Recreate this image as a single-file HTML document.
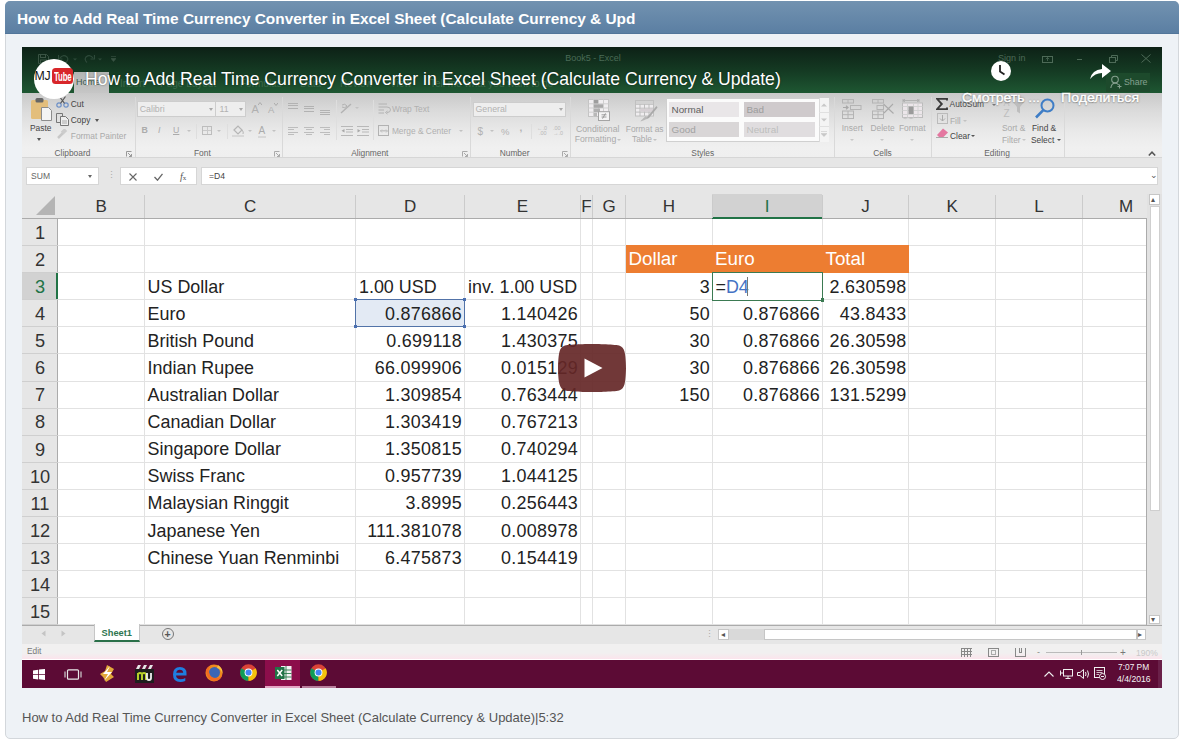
<!DOCTYPE html><html><head><meta charset="utf-8"><style>
*{margin:0;padding:0;box-sizing:border-box}
html,body{width:1180px;height:739px;overflow:hidden;background:#fff;font-family:"Liberation Sans",sans-serif}
.a{position:absolute}
.t{white-space:nowrap}
.box{left:5px;top:1px;width:1174px;height:738px;border:1px solid #d3d7db;border-radius:5px;background:#eef2f6}
.hdr{left:-1px;top:-1px;width:1174px;height:32.5px;background:linear-gradient(#7292b0,#5b7fa3);border-bottom:1px solid #52769a;border-radius:5px 5px 0 0}
.hdrt{left:12px;top:9.3px;font-size:15.4px;font-weight:bold;color:#fff;white-space:nowrap}
.vid{left:22px;top:47px;width:1140px;height:641px;background:#fff;overflow:hidden}
.cap{left:22px;top:710px;font-size:13px;color:#555;white-space:nowrap}
.rl{color:#666}
.rd{color:#444}
.rf{color:#a8a8a8}
.cell{color:#222}
</style></head><body>
<div class="a box">
<div class="a hdr"><div class="a hdrt">How to Add Real Time Currency Converter in Excel Sheet (Calculate Currency &amp; Upd</div></div>
</div>
<div class="a vid">
<div class="a " style="left:0.0px;top:0.0px;width:1140.0px;height:46.0px;background:linear-gradient(#0d2116,#153c24 55%,#1e5732)"></div>
<div class="a " style="left:51.8px;top:25.1px;width:35.1px;height:20.9px;background:linear-gradient(#b3b5b3,#c6c6c6)"></div>
<div class="a t " style="left:54.0px;top:30.9px;font-size:9px;line-height:9px;color:#3c5a48">Home</div>
<div class="a t " style="left:98.0px;top:31.5px;font-size:10px;line-height:10px;color:#3d6a4b">Insert</div>
<div class="a t " style="left:138.0px;top:31.5px;font-size:10px;line-height:10px;color:#3d6a4b">Page Layout</div>
<div class="a t " style="left:218.0px;top:31.5px;font-size:10px;line-height:10px;color:#3d6a4b">Formulas</div>
<div class="a t " style="left:278.0px;top:31.5px;font-size:10px;line-height:10px;color:#3d6a4b">Data</div>
<div class="a t " style="left:318.0px;top:31.5px;font-size:10px;line-height:10px;color:#3d6a4b">Review</div>
<div class="a t " style="left:368.0px;top:31.5px;font-size:10px;line-height:10px;color:#3d6a4b">View</div>
<div class="a t " style="left:408.0px;top:31.5px;font-size:10px;line-height:10px;color:#3d6a4b">Tell me what you want to do</div>
<div class="a t " style="left:271.0px;width:600px;text-align:center;top:7.4px;font-size:9px;line-height:9px;color:#4a6b56">Book5 - Excel</div>
<div class="a t " style="left:976.0px;top:7.4px;font-size:9px;line-height:9px;color:#4d6a57">Sign in</div>
<svg class="a" style="left:1020.0px;top:8.5px" width="11" height="7" viewBox="0 0 11 7"><rect x="0.5" y="0.5" width="10" height="6" fill="none" stroke="#4d6a57"/><path d="M5.5 1.5V5M3.8 3.2L5.5 1.5L7.2 3.2" fill="none" stroke="#4d6a57" stroke-width="0.8"/></svg>
<div class="a " style="left:1055.0px;top:11.5px;width:5.0px;height:1.0px;background:#4d6a57"></div>
<svg class="a" style="left:1087.0px;top:7.5px" width="9" height="8" viewBox="0 0 9 8"><rect x="0.5" y="2.5" width="6" height="5" fill="none" stroke="#4d6a57"/><path d="M2.5 2.5V0.5H8.5V5.5H6.5" fill="none" stroke="#4d6a57"/></svg>
<svg class="a" style="left:1118.5px;top:7.0px" width="10" height="9" viewBox="0 0 10 9"><path d="M0.5 0.5L9.5 8.5M9.5 0.5L0.5 8.5" stroke="#4d6a57" stroke-width="1"/></svg>
<svg class="a" style="left:15.5px;top:7.0px" width="11" height="10" viewBox="0 0 11 10"><path d="M0.5 0.5H8.5L10.5 2.5V9.5H0.5Z" fill="none" stroke="#3a5444" stroke-width="1"/><rect x="2.5" y="0.5" width="5" height="3" fill="none" stroke="#3a5444"/><rect x="2.5" y="6" width="6" height="3.5" fill="none" stroke="#3a5444"/></svg>
<svg class="a" style="left:36.0px;top:7.0px" width="11" height="9" viewBox="0 0 11 9"><path d="M2 4Q5 0 9 3Q11 6 8 8.5" fill="none" stroke="#2e4a3a" stroke-width="1.2"/><path d="M0.5 1V5H4.5" fill="none" stroke="#2e4a3a" stroke-width="1.2"/></svg>
<svg class="a" style="left:50.5px;top:10.5px" width="4" height="3" viewBox="0 0 4 3"><path d="M0 0.5L2 2.5L4 0.5Z" fill="#2e4a3a"/></svg>
<svg class="a" style="left:61.5px;top:7.0px" width="11" height="9" viewBox="0 0 11 9"><path d="M9 4Q6 0 2 3Q0 6 3 8.5" fill="none" stroke="#2e4a3a" stroke-width="1.2"/><path d="M10.5 1V5H6.5" fill="none" stroke="#2e4a3a" stroke-width="1.2"/></svg>
<svg class="a" style="left:75.5px;top:10.5px" width="4" height="3" viewBox="0 0 4 3"><path d="M0 0.5L2 2.5L4 0.5Z" fill="#2e4a3a"/></svg>
<svg class="a" style="left:88.5px;top:9.0px" width="5" height="6" viewBox="0 0 5 6"><path d="M0 0.5H5M0 2.5L2.5 5.5L5 2.5Z" fill="#3a5444" stroke="#3a5444" stroke-width="0.6"/></svg>
<div class="a " style="left:1084.0px;top:25.7px;width:43.8px;height:19.1px;background:#1d4a2c"></div>
<div class="a t " style="left:1102.0px;top:31.1px;font-size:8.8px;line-height:8.8px;color:#86a08f">Share</div>
<svg class="a" style="left:1088.0px;top:28.0px" width="12" height="14" viewBox="0 0 12 14"><circle cx="5" cy="4.5" r="3.3" fill="none" stroke="#86a08f" stroke-width="1.1"/><path d="M0.8 13Q1.5 8.3 5 8.3Q7.5 8.3 8.7 10M9.5 9.5v4M7.5 11.5h4" fill="none" stroke="#86a08f" stroke-width="1.1"/></svg>
<div class="a " style="left:0.0px;top:46.0px;width:1140.0px;height:65.0px;background:linear-gradient(#c9c9c9,#dcdcdc 30%,#eaeaea 62%,#f0f0f0 85%,#efefef);border-bottom:1px solid #d6d6d6"></div>
<div class="a " style="left:112.5px;top:50.0px;width:1.0px;height:60.0px;background:#d9d9d9"></div>
<div class="a " style="left:259.5px;top:50.0px;width:1.0px;height:60.0px;background:#d9d9d9"></div>
<div class="a " style="left:447.5px;top:50.0px;width:1.0px;height:60.0px;background:#d9d9d9"></div>
<div class="a " style="left:547.5px;top:50.0px;width:1.0px;height:60.0px;background:#d9d9d9"></div>
<div class="a " style="left:811.5px;top:50.0px;width:1.0px;height:60.0px;background:#d9d9d9"></div>
<div class="a " style="left:909.0px;top:50.0px;width:1.0px;height:60.0px;background:#d9d9d9"></div>
<div class="a " style="left:1041.5px;top:50.0px;width:1.0px;height:60.0px;background:#d9d9d9"></div>
<div class="a " style="left:174.0px;top:77.0px;width:1.0px;height:15.0px;background:#dedede"></div>
<div class="a " style="left:204.5px;top:77.0px;width:1.0px;height:15.0px;background:#dedede"></div>
<div class="a " style="left:313.5px;top:53.0px;width:1.0px;height:40.0px;background:#dedede"></div>
<div class="a " style="left:350.5px;top:53.0px;width:1.0px;height:40.0px;background:#dedede"></div>
<div class="a " style="left:509.0px;top:77.0px;width:1.0px;height:15.0px;background:#dedede"></div>
<svg class="a" style="left:9.0px;top:50.0px" width="22" height="25" viewBox="0 0 22 25"><rect x="0" y="3" width="17" height="19" rx="1.5" fill="#e3be7c"/><rect x="4.5" y="1" width="8" height="4.5" rx="1.5" fill="#666"/><path d="M10.5 10.5H17.5L20.5 13.5V23.5H10.5Z" fill="#f4f4f4" stroke="#8c8c8c"/></svg>
<div class="a t " style="left:8.0px;top:76.5px;font-size:8.4px;line-height:8.4px;color:#444;">Paste</div>
<div class="a" style="left:15.0px;top:91.0px;width:0;height:0;border-left:2.5px solid transparent;border-right:2.5px solid transparent;border-top:3.0px solid #555"></div>
<svg class="a" style="left:34.0px;top:49.0px" width="13" height="12" viewBox="0 0 13 12"><circle cx="3" cy="9" r="2.2" fill="none" stroke="#6b8fc7" stroke-width="1.2"/><circle cx="10" cy="9" r="2.2" fill="none" stroke="#6b8fc7" stroke-width="1.2"/><path d="M4.5 7.3L9.5 0.5M8.5 7.3L3.5 0.5" stroke="#555" stroke-width="1.1"/></svg>
<div class="a t " style="left:48.8px;top:52.6px;font-size:8.4px;line-height:8.4px;color:#444;">Cut</div>
<svg class="a" style="left:34.0px;top:66.0px" width="13" height="13" viewBox="0 0 13 13"><path d="M0.5 0.5H6.5V9.5H0.5Z" fill="none" stroke="#777"/><path d="M4.5 3.5H9.5L12.5 6.5V12.5H4.5Z" fill="#eee" stroke="#777"/><path d="M6 8h5M6 10h5" stroke="#aaa"/></svg>
<div class="a t " style="left:48.8px;top:68.9px;font-size:8.4px;line-height:8.4px;color:#444;">Copy</div>
<div class="a" style="left:73.0px;top:72.0px;width:0;height:0;border-left:2.5px solid transparent;border-right:2.5px solid transparent;border-top:3.0px solid #555"></div>
<svg class="a" style="left:35.0px;top:82.0px" width="11" height="10" viewBox="0 0 11 10"><path d="M1 9L6 4" stroke="#c8c8c8" stroke-width="2.5"/><rect x="5" y="0.5" width="5" height="4" fill="#ccc" transform="rotate(-45 7 3)"/></svg>
<div class="a t " style="left:48.8px;top:85.2px;font-size:8.4px;line-height:8.4px;color:#aaa;">Format Painter</div>
<div class="a t " style="left:32.5px;top:101.7px;font-size:8.4px;line-height:8.4px;color:#666;">Clipboard</div>
<svg class="a" style="left:104.0px;top:104.0px" width="6" height="6" viewBox="0 0 6 6"><path d="M0.5 5.5V0.5H5.5" fill="none" stroke="#999"/><path d="M2 2L5.5 5.5M5.5 3V5.5H3" fill="none" stroke="#999"/></svg>
<div class="a " style="left:115.2px;top:54.4px;width:79.2px;height:15.5px;border:1px solid #cdcdcd;background:#eeeeee"></div>
<div class="a t " style="left:117.7px;top:57.8px;font-size:8.8px;line-height:8.8px;color:#b2b2b2;">Calibri</div>
<div class="a" style="left:186.5px;top:61.0px;width:0;height:0;border-left:2.5px solid transparent;border-right:2.5px solid transparent;border-top:3.0px solid #aaa"></div>
<div class="a " style="left:194.4px;top:54.4px;width:30.1px;height:15.5px;border:1px solid #cdcdcd;border-left:none;background:#eeeeee"></div>
<div class="a t " style="left:197.4px;top:57.8px;font-size:8.8px;line-height:8.8px;color:#b2b2b2;">11</div>
<div class="a" style="left:216.5px;top:61.0px;width:0;height:0;border-left:2.5px solid transparent;border-right:2.5px solid transparent;border-top:3.0px solid #aaa"></div>
<div class="a t " style="left:229.5px;top:56.7px;font-size:11px;line-height:11px;color:#b0b0b0;">A</div>
<svg class="a" style="left:236.0px;top:55.0px" width="4" height="4" viewBox="0 0 4 4"><path d="M0 3L2 0.5L4 3" fill="none" stroke="#aaa"/></svg>
<div class="a t " style="left:246.0px;top:58.0px;font-size:9.5px;line-height:9.5px;color:#b0b0b0;">A</div>
<svg class="a" style="left:252.0px;top:55.0px" width="4" height="4" viewBox="0 0 4 4"><path d="M0 1L2 3.5L4 1" fill="none" stroke="#aaa"/></svg>
<div class="a t " style="left:119.5px;top:79.0px;font-size:8.8px;line-height:8.8px;color:#ababab;font-weight:bold">B</div>
<div class="a t " style="left:136.0px;top:79.0px;font-size:8.8px;line-height:8.8px;color:#ababab;font-family:"Liberation Serif",serif"><i>I</i></div>
<div class="a t " style="left:151.0px;top:79.0px;font-size:8.8px;line-height:8.8px;color:#ababab;"><u>U</u></div>
<div class="a" style="left:164.5px;top:83.0px;width:0;height:0;border-left:2.0px solid transparent;border-right:2.0px solid transparent;border-top:2.5px solid #c2c2c2"></div>
<div class="a " style="left:180.0px;top:79.0px;width:10.0px;height:9.0px;border:1px solid #bdbdbd;background:linear-gradient(#c9c9c9,#c9c9c9) center/1px 100% no-repeat,linear-gradient(#c9c9c9,#c9c9c9) center/100% 1px no-repeat"></div>
<div class="a" style="left:194.6px;top:83.0px;width:0;height:0;border-left:2.0px solid transparent;border-right:2.0px solid transparent;border-top:2.5px solid #c2c2c2"></div>
<svg class="a" style="left:210.0px;top:77.0px" width="12" height="13" viewBox="0 0 12 13"><path d="M2 6L6 2L10 6L6 10Z" fill="none" stroke="#b5b5b5" stroke-width="1.2"/><path d="M10 6Q12 8 11 10" stroke="#b5b5b5" fill="none"/><rect x="0" y="11" width="12" height="2" fill="#d8d8d8"/></svg>
<div class="a" style="left:225.5px;top:83.0px;width:0;height:0;border-left:2.0px solid transparent;border-right:2.0px solid transparent;border-top:2.5px solid #c2c2c2"></div>
<div class="a t " style="left:236.5px;top:79.0px;font-size:10px;line-height:10px;color:#ababab;">A</div>
<div class="a " style="left:236.0px;top:89.0px;width:8.0px;height:2.0px;background:#d8d8d8"></div>
<div class="a" style="left:250.0px;top:83.0px;width:0;height:0;border-left:2.0px solid transparent;border-right:2.0px solid transparent;border-top:2.5px solid #c2c2c2"></div>
<div class="a t " style="left:172.0px;top:101.7px;font-size:8.4px;line-height:8.4px;color:#666;">Font</div>
<svg class="a" style="left:251.5px;top:104.0px" width="6" height="6" viewBox="0 0 6 6"><path d="M0.5 5.5V0.5H5.5" fill="none" stroke="#aaa"/><path d="M2 2L5.5 5.5M5.5 3V5.5H3" fill="none" stroke="#aaa"/></svg>
<div class="a " style="left:265.5px;top:56.0px;width:10.0px;height:1.0px;background:#b2b2b2"></div>
<div class="a " style="left:265.5px;top:58.4px;width:10.0px;height:1.0px;background:#b2b2b2"></div>
<div class="a " style="left:265.5px;top:60.8px;width:10.0px;height:1.0px;background:#b2b2b2"></div>
<div class="a " style="left:281.5px;top:59.0px;width:10.0px;height:1.0px;background:#b2b2b2"></div>
<div class="a " style="left:281.5px;top:61.4px;width:10.0px;height:1.0px;background:#b2b2b2"></div>
<div class="a " style="left:281.5px;top:63.8px;width:10.0px;height:1.0px;background:#b2b2b2"></div>
<div class="a " style="left:297.5px;top:62.5px;width:10.0px;height:1.0px;background:#b2b2b2"></div>
<div class="a " style="left:297.5px;top:64.9px;width:10.0px;height:1.0px;background:#b2b2b2"></div>
<div class="a " style="left:297.5px;top:67.3px;width:10.0px;height:1.0px;background:#b2b2b2"></div>
<div class="a " style="left:265.5px;top:80.0px;width:10.0px;height:1.0px;background:#bdbdbd"></div>
<div class="a " style="left:265.5px;top:82.4px;width:6.0px;height:1.0px;background:#bdbdbd"></div>
<div class="a " style="left:265.5px;top:84.8px;width:10.0px;height:1.0px;background:#bdbdbd"></div>
<div class="a " style="left:265.5px;top:87.2px;width:6.0px;height:1.0px;background:#bdbdbd"></div>
<div class="a " style="left:281.5px;top:80.0px;width:10.0px;height:1.0px;background:#bdbdbd"></div>
<div class="a " style="left:283.5px;top:82.4px;width:6.0px;height:1.0px;background:#bdbdbd"></div>
<div class="a " style="left:281.5px;top:84.8px;width:10.0px;height:1.0px;background:#bdbdbd"></div>
<div class="a " style="left:283.5px;top:87.2px;width:6.0px;height:1.0px;background:#bdbdbd"></div>
<div class="a " style="left:297.5px;top:80.0px;width:10.0px;height:1.0px;background:#bdbdbd"></div>
<div class="a " style="left:301.5px;top:82.4px;width:6.0px;height:1.0px;background:#bdbdbd"></div>
<div class="a " style="left:297.5px;top:84.8px;width:10.0px;height:1.0px;background:#bdbdbd"></div>
<div class="a " style="left:301.5px;top:87.2px;width:6.0px;height:1.0px;background:#bdbdbd"></div>
<svg class="a" style="left:318.0px;top:56.0px" width="12" height="11" viewBox="0 0 12 11"><path d="M1 10L11 1" stroke="#b2b2b2" stroke-width="1.4"/><path d="M2 2Q5 0 7 3Q5 6 2 4" fill="none" stroke="#b2b2b2"/></svg>
<div class="a" style="left:333.0px;top:60.0px;width:0;height:0;border-left:2.0px solid transparent;border-right:2.0px solid transparent;border-top:2.5px solid #c2c2c2"></div>
<svg class="a" style="left:318.5px;top:79.0px" width="12" height="10" viewBox="0 0 12 10"><path d="M0 0.5H12M5 3.5H12M5 6H12M0 9.5H12" stroke="#b8b8b8"/><path d="M0.5 4.8L3.5 3V6.6Z" fill="#a8a8a8"/></svg>
<svg class="a" style="left:334.5px;top:79.0px" width="12" height="10" viewBox="0 0 12 10"><path d="M0 0.5H12M5 3.5H12M5 6H12M0 9.5H12" stroke="#b8b8b8"/><path d="M3.5 4.8L0.5 3V6.6Z" fill="#a8a8a8"/></svg>
<svg class="a" style="left:355.5px;top:55.5px" width="14" height="12" viewBox="0 0 14 12"><path d="M0.5 1H9M0.5 4H9M0.5 7H6M0.5 10H6" stroke="#b2b2b2"/><path d="M9 4Q12.5 4 12.5 6.8Q12.5 9.5 9 9.5" fill="none" stroke="#b2b2b2"/><path d="M9.5 8L7.5 9.5L9.5 11" fill="none" stroke="#b2b2b2"/></svg>
<div class="a " style="left:356.0px;top:78.3px;width:11.2px;height:10.7px;border:1px solid #b2b2b2"></div>
<svg class="a" style="left:357.5px;top:82.0px" width="8" height="4" viewBox="0 0 8 4"><path d="M0.5 2H7.5M2 0.5L0.5 2L2 3.5M6 0.5L7.5 2L6 3.5" fill="none" stroke="#b8b8b8" stroke-width="0.8"/></svg>
<div class="a t " style="left:369.9px;top:58.3px;font-size:8.4px;line-height:8.4px;color:#b0b0b0;">Wrap Text</div>
<div class="a " style="left:356.0px;top:78.3px;width:11.2px;height:10.7px;border:1px solid #b2b2b2"></div>
<div class="a " style="left:358.0px;top:83.0px;width:7.0px;height:1.0px;background:#c4c4c4"></div>
<div class="a t " style="left:369.9px;top:80.4px;font-size:8.4px;line-height:8.4px;color:#b0b0b0;">Merge &amp; Center</div>
<div class="a" style="left:437.2px;top:83.0px;width:0;height:0;border-left:2.0px solid transparent;border-right:2.0px solid transparent;border-top:2.5px solid #c2c2c2"></div>
<div class="a t " style="left:329.2px;top:101.8px;font-size:8.4px;line-height:8.4px;color:#666;">Alignment</div>
<svg class="a" style="left:440.0px;top:104.0px" width="6" height="6" viewBox="0 0 6 6"><path d="M0.5 5.5V0.5H5.5" fill="none" stroke="#aaa"/><path d="M2 2L5.5 5.5M5.5 3V5.5H3" fill="none" stroke="#aaa"/></svg>
<div class="a " style="left:450.9px;top:54.5px;width:93.2px;height:15.6px;border:1px solid #cdcdcd;background:#eeeeee"></div>
<div class="a t " style="left:453.5px;top:58.0px;font-size:8.8px;line-height:8.8px;color:#b2b2b2;">General</div>
<div class="a" style="left:536.5px;top:61.0px;width:0;height:0;border-left:2.5px solid transparent;border-right:2.5px solid transparent;border-top:3.0px solid #aaa"></div>
<div class="a t " style="left:455.5px;top:79.5px;font-size:10px;line-height:10px;color:#b2b2b2;">$</div>
<div class="a" style="left:468.0px;top:83.0px;width:0;height:0;border-left:2.0px solid transparent;border-right:2.0px solid transparent;border-top:2.5px solid #c2c2c2"></div>
<div class="a t " style="left:479.0px;top:79.5px;font-size:9.5px;line-height:9.5px;color:#b2b2b2;">%</div>
<div class="a t " style="left:497.5px;top:75.5px;font-size:10px;line-height:10px;color:#b2b2b2;font-weight:bold">&#8218;</div>
<div class="a t " style="left:515.0px;top:78.8px;font-size:5.5px;line-height:5.5px;color:#b8b8b8;">&#8592;.0</div>
<div class="a t " style="left:517.0px;top:84.3px;font-size:5.5px;line-height:5.5px;color:#b8b8b8;">.00</div>
<div class="a t " style="left:531.0px;top:78.8px;font-size:5.5px;line-height:5.5px;color:#b8b8b8;">.00</div>
<div class="a t " style="left:531.0px;top:84.3px;font-size:5.5px;line-height:5.5px;color:#b8b8b8;">&#8594;.0</div>
<div class="a t " style="left:477.7px;top:101.8px;font-size:8.4px;line-height:8.4px;color:#666;">Number</div>
<svg class="a" style="left:540.0px;top:104.0px" width="6" height="6" viewBox="0 0 6 6"><path d="M0.5 5.5V0.5H5.5" fill="none" stroke="#aaa"/><path d="M2 2L5.5 5.5M5.5 3V5.5H3" fill="none" stroke="#aaa"/></svg>
<svg class="a" style="left:566.0px;top:51.5px" width="23" height="22" viewBox="0 0 23 22"><rect x="0.5" y="0.5" width="20" height="17" fill="#f0eef0" stroke="#c4c4c4"/><path d="M0.5 4.8h20M0.5 9h20M0.5 13.2h20M5.5 0.5v17M10.5 0.5v17M15.5 0.5v17" stroke="#cfcfcf"/><rect x="6" y="1" width="4" height="3.5" fill="#9e9e9e"/><rect x="6" y="5.3" width="9" height="3.5" fill="#a8a8a8"/><rect x="6" y="9.5" width="6" height="3.5" fill="#b0b0b0"/><rect x="6" y="13.7" width="3" height="3.5" fill="#b8b8b8"/><rect x="10.5" y="12.7" width="11" height="8.8" fill="#f4f4f4" stroke="#a4a4a4"/><path d="M13.5 15.8h5M13.5 18h5M17.5 14.3L14.5 19.7" stroke="#8a8a8a" stroke-width="0.8"/></svg>
<div class="a t " style="left:554.0px;top:77.5px;font-size:8.7px;line-height:8.7px;color:#aaa;">Conditional</div>
<div class="a t " style="left:552.7px;top:88.0px;font-size:8.7px;line-height:8.7px;color:#aaa;">Formatting</div>
<div class="a" style="left:595.0px;top:92.0px;width:0;height:0;border-left:2.0px solid transparent;border-right:2.0px solid transparent;border-top:2.5px solid #c2c2c2"></div>
<svg class="a" style="left:612.5px;top:52.5px" width="23" height="22" viewBox="0 0 23 22"><rect x="0.5" y="0.5" width="18" height="15.5" fill="#efedef" stroke="#c0c0c0"/><path d="M0.5 4.3h18M0.5 8.2h18M0.5 12.1h18M5 0.5v15.5M9.5 0.5v15.5M14 0.5v15.5" stroke="#bdbdbd"/><rect x="1" y="1" width="17" height="3" fill="#d2d2d2"/><rect x="5.5" y="8.7" width="12.5" height="3" fill="#d6d0d4"/><path d="M21.5 6L12.5 16.5L10.5 19.5L14 18L22.5 7.5Z" fill="#aaa"/><path d="M11 16Q6 20 5.5 21.5Q9 21 12.5 18" fill="#b8b8b8"/></svg>
<div class="a t " style="left:603.8px;top:77.8px;font-size:8.4px;line-height:8.4px;color:#aaa;">Format as</div>
<div class="a t " style="left:610.0px;top:88.3px;font-size:8.4px;line-height:8.4px;color:#aaa;">Table</div>
<div class="a" style="left:631.0px;top:92.0px;width:0;height:0;border-left:2.0px solid transparent;border-right:2.0px solid transparent;border-top:2.5px solid #c2c2c2"></div>
<div class="a " style="left:643.5px;top:50.5px;width:163.5px;height:44.0px;background:#fbfbfb;border:1px solid #d0d0d0"></div>
<div class="a " style="left:647.0px;top:55.0px;width:70.0px;height:15.0px;background:#e9e6e8"></div>
<div class="a t " style="left:649.5px;top:57.7px;font-size:9.9px;line-height:9.9px;color:#5e5e5e;">Normal</div>
<div class="a " style="left:722.0px;top:55.0px;width:71.0px;height:15.0px;background:#cfcacc"></div>
<div class="a t " style="left:724.5px;top:57.7px;font-size:9.9px;line-height:9.9px;color:#9d9d9d;">Bad</div>
<div class="a " style="left:647.0px;top:75.0px;width:70.0px;height:15.0px;background:#d9d6d7"></div>
<div class="a t " style="left:649.5px;top:77.6px;font-size:9.9px;line-height:9.9px;color:#a2a2a2;">Good</div>
<div class="a " style="left:722.0px;top:75.0px;width:71.0px;height:15.0px;background:#e0dddf"></div>
<div class="a t " style="left:724.5px;top:77.6px;font-size:9.9px;line-height:9.9px;color:#bdbdbd;">Neutral</div>
<div class="a " style="left:797.0px;top:50.5px;width:10.0px;height:44.0px;background:#f4f4f4;border-left:1px solid #dadada"></div>
<div class="a " style="left:797.0px;top:65.0px;width:10.0px;height:1.0px;background:#e0e0e0"></div>
<div class="a " style="left:797.0px;top:79.0px;width:10.0px;height:1.0px;background:#e0e0e0"></div>
<svg class="a" style="left:799.0px;top:56.0px" width="6" height="4" viewBox="0 0 6 4"><path d="M0 3.5L3 0.5L6 3.5Z" fill="#c8c8c8"/></svg>
<svg class="a" style="left:799.0px;top:71.0px" width="6" height="4" viewBox="0 0 6 4"><path d="M0 0.5L3 3.5L6 0.5Z" fill="#c8c8c8"/></svg>
<svg class="a" style="left:799.0px;top:84.0px" width="6" height="6" viewBox="0 0 6 6"><path d="M0 0.5H6M0 2.5L3 5.5L6 2.5Z" fill="#c8c8c8" stroke="#c8c8c8" stroke-width="0.6"/></svg>
<div class="a t " style="left:669.3px;top:102.0px;font-size:8.4px;line-height:8.4px;color:#666;">Styles</div>
<svg class="a" style="left:820.0px;top:51.5px" width="21" height="20" viewBox="0 0 21 20"><g fill="none" stroke="#b4b4b4"><rect x="0.5" y="0.5" width="11" height="3.5"/><path d="M6 0.5v3.5"/><rect x="8.5" y="6.5" width="10.5" height="4"/><rect x="0.5" y="12" width="11" height="7.5"/><path d="M6 12v7.5M0.5 15.7h11"/></g><path d="M1 8.5H6M4 6.8L6 8.5L4 10.2" fill="none" stroke="#a8a8a8" stroke-width="1.2"/></svg>
<svg class="a" style="left:849.5px;top:51.5px" width="23" height="20" viewBox="0 0 23 20"><g fill="none" stroke="#b4b4b4"><rect x="0.5" y="0.5" width="11" height="3.5"/><path d="M6 0.5v3.5"/><rect x="5" y="6.5" width="6.5" height="4"/><rect x="0.5" y="12" width="11" height="7.5"/><path d="M6 12v7.5M0.5 15.7h11"/></g><path d="M11.5 5L21.5 14.5M21 5L12 14" stroke="#aaa" stroke-width="1.1"/></svg>
<svg class="a" style="left:879.5px;top:50.5px" width="21" height="22" viewBox="0 0 21 22"><path d="M1 2.5H17M1 1V4M17 1V4M3 1.2L1 2.5L3 3.8M15 1.2L17 2.5L15 3.8" fill="none" stroke="#aaa" stroke-width="0.8"/><rect x="0.5" y="5" width="20" height="14.5" fill="#ece6ea" stroke="#bcbcbc"/><path d="M0.5 8.5h20M0.5 12.5h20M0.5 16.5h20M5.5 5v14.5M11.5 5v14.5M16 5v14.5" stroke="#d2d2d2"/><rect x="6.5" y="8.5" width="5" height="7.5" fill="#9a9a9a"/><path d="M0.5 19.5Q3 22 6 19.5Q9 22 12 19.5" fill="none" stroke="#c8c8c8"/></svg>
<div class="a t " style="left:819.8px;top:76.7px;font-size:8.4px;line-height:8.4px;color:#aaa;">Insert</div>
<div class="a" style="left:827.5px;top:92.0px;width:0;height:0;border-left:2.0px solid transparent;border-right:2.0px solid transparent;border-top:2.5px solid #c8c8c8"></div>
<div class="a t " style="left:848.5px;top:76.7px;font-size:8.4px;line-height:8.4px;color:#aaa;">Delete</div>
<div class="a" style="left:858.0px;top:92.0px;width:0;height:0;border-left:2.0px solid transparent;border-right:2.0px solid transparent;border-top:2.5px solid #c8c8c8"></div>
<div class="a t " style="left:877.0px;top:76.7px;font-size:8.4px;line-height:8.4px;color:#aaa;">Format</div>
<div class="a" style="left:887.5px;top:92.0px;width:0;height:0;border-left:2.0px solid transparent;border-right:2.0px solid transparent;border-top:2.5px solid #c8c8c8"></div>
<div class="a t " style="left:851.2px;top:101.8px;font-size:8.4px;line-height:8.4px;color:#666;">Cells</div>
<svg class="a" style="left:913.5px;top:51.0px" width="12" height="12" viewBox="0 0 12 12"><path d="M11 2.5V0.8H1L5.8 6L1 11.2H11V9.5" fill="none" stroke="#3a3a3a" stroke-width="1.9"/></svg>
<div class="a t " style="left:927.6px;top:53.4px;font-size:8.4px;line-height:8.4px;color:#4a4a4a;">AutoSum</div>
<div class="a" style="left:970.0px;top:57.0px;width:0;height:0;border-left:2.0px solid transparent;border-right:2.0px solid transparent;border-top:2.5px solid #777"></div>
<svg class="a" style="left:915.0px;top:66.0px" width="11" height="11" viewBox="0 0 11 11"><rect x="0.5" y="0.5" width="10" height="10" fill="none" stroke="#bbb"/><path d="M5.5 2v6M3 5.5L5.5 8L8 5.5" fill="none" stroke="#aaa"/></svg>
<div class="a t " style="left:928.0px;top:69.9px;font-size:8.4px;line-height:8.4px;color:#aaa;">Fill</div>
<div class="a" style="left:941.0px;top:73.0px;width:0;height:0;border-left:2.0px solid transparent;border-right:2.0px solid transparent;border-top:2.5px solid #c2c2c2"></div>
<svg class="a" style="left:914.0px;top:80.0px" width="13" height="11" viewBox="0 0 13 11"><path d="M1 8L7 1.5L12 5.5L7.5 10H3Z" fill="#e477a0"/><path d="M0 10.5H12" stroke="#aaa"/></svg>
<div class="a t " style="left:928.0px;top:85.3px;font-size:8.4px;line-height:8.4px;color:#444;">Clear</div>
<div class="a" style="left:949.0px;top:88.0px;width:0;height:0;border-left:2.0px solid transparent;border-right:2.0px solid transparent;border-top:2.5px solid #555"></div>
<div class="a t " style="left:981.5px;top:51.9px;font-size:9px;line-height:9px;color:#bdbdbd;">A</div>
<div class="a t " style="left:981.5px;top:62.0px;font-size:10px;line-height:10px;color:#bdbdbd;">Z</div>
<svg class="a" style="left:990.0px;top:54.0px" width="13" height="13" viewBox="0 0 13 13"><path d="M0.5 0.5H12.5L8 6V12.5L5 10.5V6Z" fill="#bdbdbd"/></svg>
<div class="a t " style="left:980.0px;top:76.9px;font-size:8.4px;line-height:8.4px;color:#aaa;">Sort &amp;</div>
<div class="a t " style="left:980.0px;top:88.7px;font-size:8.4px;line-height:8.4px;color:#aaa;">Filter</div>
<div class="a" style="left:1000.0px;top:92.0px;width:0;height:0;border-left:2.0px solid transparent;border-right:2.0px solid transparent;border-top:2.5px solid #c8c8c8"></div>
<svg class="a" style="left:1012.0px;top:51.0px" width="22" height="21" viewBox="0 0 22 21"><circle cx="13.5" cy="7.5" r="6" fill="none" stroke="#3e7dc6" stroke-width="2"/><path d="M9.5 11.8L2 19.5" stroke="#3e7dc6" stroke-width="2.6"/></svg>
<div class="a t " style="left:1010.0px;top:76.9px;font-size:8.4px;line-height:8.4px;color:#444;">Find &amp;</div>
<div class="a t " style="left:1009.0px;top:88.7px;font-size:8.4px;line-height:8.4px;color:#444;">Select</div>
<div class="a" style="left:1035.0px;top:92.0px;width:0;height:0;border-left:2.0px solid transparent;border-right:2.0px solid transparent;border-top:2.5px solid #555"></div>
<div class="a t " style="left:962.2px;top:101.8px;font-size:8.4px;line-height:8.4px;color:#666;">Editing</div>
<svg class="a" style="left:1125.5px;top:103.5px" width="8" height="5" viewBox="0 0 8 5"><path d="M0.8 4.5L4 1.2L7.2 4.5" fill="none" stroke="#555" stroke-width="1.5"/></svg>
<div class="a " style="left:0.0px;top:111.0px;width:1140.0px;height:60.5px;background:#e6e6e6"></div>
<div class="a " style="left:3.5px;top:119.5px;width:73.0px;height:18.0px;background:#fff;border:1px solid #d6d6d6"></div>
<div class="a t " style="left:8.8px;top:125.0px;font-size:9px;line-height:9px;color:#666;transform:scaleX(0.95);transform-origin:0 0">SUM</div>
<div class="a" style="left:66.0px;top:128.0px;width:0;height:0;border-left:2.5px solid transparent;border-right:2.5px solid transparent;border-top:3.0px solid #666"></div>
<div class="a t " style="left:85.0px;top:124.4px;font-size:9px;line-height:9px;color:#aaa">&#8942;</div>
<div class="a " style="left:97.5px;top:119.5px;width:77.5px;height:18.0px;background:#fff;border:1px solid #d6d6d6"></div>
<svg class="a" style="left:107.0px;top:126.0px" width="8" height="8" viewBox="0 0 8 8"><path d="M0.5 0.5L7.5 7.5M7.5 0.5L0.5 7.5" stroke="#666" stroke-width="1.1"/></svg>
<svg class="a" style="left:131.5px;top:126.0px" width="9" height="8" viewBox="0 0 9 8"><path d="M0.5 4L3.5 7.2L8.5 0.8" fill="none" stroke="#666" stroke-width="1.3"/></svg>
<div class="a t " style="left:158.0px;top:124.5px;font-size:10px;line-height:10px;color:#555;font-family:'Liberation Serif',serif"><i>f</i><span style="font-size:7px">x</span></div>
<div class="a " style="left:178.5px;top:119.5px;width:957.5px;height:18.0px;background:#fff;border:1px solid #d6d6d6"></div>
<div class="a t " style="left:186.8px;top:124.7px;font-size:9.3px;line-height:9.3px;color:#444;transform:scaleX(0.93);transform-origin:0 0">=D4</div>
<div class="a t " style="left:1128.0px;top:124.4px;font-size:9px;line-height:9px;color:#555">&#8964;</div>
<div class="a " style="left:0.0px;top:146.5px;width:1125.0px;height:25.0px;background:#e6e6e6;border-bottom:1px solid #ababab"></div>
<svg class="a" style="left:13px;top:148px" width="22" height="22"><path d="M20 1V20H1Z" fill="#b4b4b4"/></svg>
<div class="a " style="left:690.0px;top:146.5px;width:110.1px;height:25.0px;background:#d2d2d2;border-bottom:2px solid #217346"></div>
<div class="a " style="left:122.2px;top:148.0px;width:1.0px;height:23.0px;background:#cbcbcb"></div>
<div class="a t " style="left:-220.8px;width:600px;text-align:center;top:150.6px;font-size:17px;line-height:17px;color:#333">B</div>
<div class="a " style="left:333.3px;top:148.0px;width:1.0px;height:23.0px;background:#cbcbcb"></div>
<div class="a t " style="left:-71.8px;width:600px;text-align:center;top:150.6px;font-size:17px;line-height:17px;color:#333">C</div>
<div class="a " style="left:442.1px;top:148.0px;width:1.0px;height:23.0px;background:#cbcbcb"></div>
<div class="a t " style="left:88.2px;width:600px;text-align:center;top:150.6px;font-size:17px;line-height:17px;color:#333">D</div>
<div class="a " style="left:557.8px;top:148.0px;width:1.0px;height:23.0px;background:#cbcbcb"></div>
<div class="a t " style="left:200.5px;width:600px;text-align:center;top:150.6px;font-size:17px;line-height:17px;color:#333">E</div>
<div class="a " style="left:570.0px;top:148.0px;width:1.0px;height:23.0px;background:#cbcbcb"></div>
<div class="a t " style="left:264.4px;width:600px;text-align:center;top:150.6px;font-size:17px;line-height:17px;color:#333">F</div>
<div class="a " style="left:603.0px;top:148.0px;width:1.0px;height:23.0px;background:#cbcbcb"></div>
<div class="a t " style="left:287.0px;width:600px;text-align:center;top:150.6px;font-size:17px;line-height:17px;color:#333">G</div>
<div class="a " style="left:689.5px;top:148.0px;width:1.0px;height:23.0px;background:#cbcbcb"></div>
<div class="a t " style="left:346.8px;width:600px;text-align:center;top:150.6px;font-size:17px;line-height:17px;color:#333">H</div>
<div class="a " style="left:799.6px;top:148.0px;width:1.0px;height:23.0px;background:#cbcbcb"></div>
<div class="a t " style="left:445.0px;width:600px;text-align:center;top:150.6px;font-size:17px;line-height:17px;color:#217346">I</div>
<div class="a " style="left:886.1px;top:148.0px;width:1.0px;height:23.0px;background:#cbcbcb"></div>
<div class="a t " style="left:543.4px;width:600px;text-align:center;top:150.6px;font-size:17px;line-height:17px;color:#333">J</div>
<div class="a " style="left:973.1px;top:148.0px;width:1.0px;height:23.0px;background:#cbcbcb"></div>
<div class="a t " style="left:630.1px;width:600px;text-align:center;top:150.6px;font-size:17px;line-height:17px;color:#333">K</div>
<div class="a " style="left:1060.1px;top:148.0px;width:1.0px;height:23.0px;background:#cbcbcb"></div>
<div class="a t " style="left:717.1px;width:600px;text-align:center;top:150.6px;font-size:17px;line-height:17px;color:#333">L</div>
<div class="a " style="left:1124.5px;top:148.0px;width:1.0px;height:23.0px;background:#cbcbcb"></div>
<div class="a t " style="left:804.0px;width:600px;text-align:center;top:150.6px;font-size:17px;line-height:17px;color:#333">M</div>
<div class="a " style="left:0.0px;top:171.5px;width:1125.0px;height:406.0px;background:#fff;border-right:1px solid #ababab"></div>
<div class="a " style="left:0.0px;top:171.5px;width:36.0px;height:406.0px;background:#e6e6e6;border-right:1px solid #ababab"></div>
<div class="a " style="left:0.0px;top:225.7px;width:36.0px;height:27.1px;background:#d2d2d2;border-right:2px solid #217346"></div>
<div class="a t " style="left:-282.0px;width:600px;text-align:center;top:176.9px;font-size:18.2px;line-height:18.2px;color:#333">1</div>
<div class="a " style="left:0.0px;top:198.1px;width:36.0px;height:1.0px;background:#cfcfcf"></div>
<div class="a t " style="left:-282.0px;width:600px;text-align:center;top:204.0px;font-size:18.2px;line-height:18.2px;color:#333">2</div>
<div class="a " style="left:0.0px;top:225.2px;width:36.0px;height:1.0px;background:#cfcfcf"></div>
<div class="a t " style="left:-282.0px;width:600px;text-align:center;top:231.0px;font-size:18.2px;line-height:18.2px;color:#217346">3</div>
<div class="a " style="left:0.0px;top:252.2px;width:36.0px;height:1.0px;background:#cfcfcf"></div>
<div class="a t " style="left:-282.0px;width:600px;text-align:center;top:258.1px;font-size:18.2px;line-height:18.2px;color:#333">4</div>
<div class="a " style="left:0.0px;top:279.3px;width:36.0px;height:1.0px;background:#cfcfcf"></div>
<div class="a t " style="left:-282.0px;width:600px;text-align:center;top:285.2px;font-size:18.2px;line-height:18.2px;color:#333">5</div>
<div class="a " style="left:0.0px;top:306.4px;width:36.0px;height:1.0px;background:#cfcfcf"></div>
<div class="a t " style="left:-282.0px;width:600px;text-align:center;top:312.3px;font-size:18.2px;line-height:18.2px;color:#333">6</div>
<div class="a " style="left:0.0px;top:333.5px;width:36.0px;height:1.0px;background:#cfcfcf"></div>
<div class="a t " style="left:-282.0px;width:600px;text-align:center;top:339.4px;font-size:18.2px;line-height:18.2px;color:#333">7</div>
<div class="a " style="left:0.0px;top:360.6px;width:36.0px;height:1.0px;background:#cfcfcf"></div>
<div class="a t " style="left:-282.0px;width:600px;text-align:center;top:366.4px;font-size:18.2px;line-height:18.2px;color:#333">8</div>
<div class="a " style="left:0.0px;top:387.6px;width:36.0px;height:1.0px;background:#cfcfcf"></div>
<div class="a t " style="left:-282.0px;width:600px;text-align:center;top:393.5px;font-size:18.2px;line-height:18.2px;color:#333">9</div>
<div class="a " style="left:0.0px;top:414.7px;width:36.0px;height:1.0px;background:#cfcfcf"></div>
<div class="a t " style="left:-282.0px;width:600px;text-align:center;top:420.6px;font-size:18.2px;line-height:18.2px;color:#333">10</div>
<div class="a " style="left:0.0px;top:441.8px;width:36.0px;height:1.0px;background:#cfcfcf"></div>
<div class="a t " style="left:-282.0px;width:600px;text-align:center;top:447.7px;font-size:18.2px;line-height:18.2px;color:#333">11</div>
<div class="a " style="left:0.0px;top:468.9px;width:36.0px;height:1.0px;background:#cfcfcf"></div>
<div class="a t " style="left:-282.0px;width:600px;text-align:center;top:474.8px;font-size:18.2px;line-height:18.2px;color:#333">12</div>
<div class="a " style="left:0.0px;top:496.0px;width:36.0px;height:1.0px;background:#cfcfcf"></div>
<div class="a t " style="left:-282.0px;width:600px;text-align:center;top:501.8px;font-size:18.2px;line-height:18.2px;color:#333">13</div>
<div class="a " style="left:0.0px;top:523.0px;width:36.0px;height:1.0px;background:#cfcfcf"></div>
<div class="a t " style="left:-282.0px;width:600px;text-align:center;top:528.9px;font-size:18.2px;line-height:18.2px;color:#333">14</div>
<div class="a " style="left:0.0px;top:550.1px;width:36.0px;height:1.0px;background:#cfcfcf"></div>
<div class="a t " style="left:-282.0px;width:600px;text-align:center;top:556.0px;font-size:18.2px;line-height:18.2px;color:#333">15</div>
<div class="a " style="left:0.0px;top:577.2px;width:36.0px;height:1.0px;background:#cfcfcf"></div>
<div class="a " style="left:36.0px;top:198.1px;width:1088.0px;height:1.0px;background:#e2e2e2"></div>
<div class="a " style="left:36.0px;top:225.2px;width:1088.0px;height:1.0px;background:#e2e2e2"></div>
<div class="a " style="left:36.0px;top:252.2px;width:1088.0px;height:1.0px;background:#e2e2e2"></div>
<div class="a " style="left:36.0px;top:279.3px;width:1088.0px;height:1.0px;background:#e2e2e2"></div>
<div class="a " style="left:36.0px;top:306.4px;width:1088.0px;height:1.0px;background:#e2e2e2"></div>
<div class="a " style="left:36.0px;top:333.5px;width:1088.0px;height:1.0px;background:#e2e2e2"></div>
<div class="a " style="left:36.0px;top:360.6px;width:1088.0px;height:1.0px;background:#e2e2e2"></div>
<div class="a " style="left:36.0px;top:387.6px;width:1088.0px;height:1.0px;background:#e2e2e2"></div>
<div class="a " style="left:36.0px;top:414.7px;width:1088.0px;height:1.0px;background:#e2e2e2"></div>
<div class="a " style="left:36.0px;top:441.8px;width:1088.0px;height:1.0px;background:#e2e2e2"></div>
<div class="a " style="left:36.0px;top:468.9px;width:1088.0px;height:1.0px;background:#e2e2e2"></div>
<div class="a " style="left:36.0px;top:496.0px;width:1088.0px;height:1.0px;background:#e2e2e2"></div>
<div class="a " style="left:36.0px;top:523.0px;width:1088.0px;height:1.0px;background:#e2e2e2"></div>
<div class="a " style="left:36.0px;top:550.1px;width:1088.0px;height:1.0px;background:#e2e2e2"></div>
<div class="a " style="left:36.0px;top:577.2px;width:1088.0px;height:1.0px;background:#e2e2e2"></div>
<div class="a " style="left:122.2px;top:171.5px;width:1.0px;height:406.0px;background:#e2e2e2"></div>
<div class="a " style="left:333.3px;top:171.5px;width:1.0px;height:406.0px;background:#e2e2e2"></div>
<div class="a " style="left:442.1px;top:171.5px;width:1.0px;height:406.0px;background:#e2e2e2"></div>
<div class="a " style="left:557.8px;top:171.5px;width:1.0px;height:406.0px;background:#e2e2e2"></div>
<div class="a " style="left:570.0px;top:171.5px;width:1.0px;height:406.0px;background:#e2e2e2"></div>
<div class="a " style="left:603.0px;top:171.5px;width:1.0px;height:406.0px;background:#e2e2e2"></div>
<div class="a " style="left:689.5px;top:171.5px;width:1.0px;height:406.0px;background:#e2e2e2"></div>
<div class="a " style="left:799.6px;top:171.5px;width:1.0px;height:406.0px;background:#e2e2e2"></div>
<div class="a " style="left:886.1px;top:171.5px;width:1.0px;height:406.0px;background:#e2e2e2"></div>
<div class="a " style="left:973.1px;top:171.5px;width:1.0px;height:406.0px;background:#e2e2e2"></div>
<div class="a " style="left:1060.1px;top:171.5px;width:1.0px;height:406.0px;background:#e2e2e2"></div>
<div class="a " style="left:1124.5px;top:171.5px;width:1.0px;height:406.0px;background:#e2e2e2"></div>
<div class="a " style="left:603.5px;top:198.1px;width:283.1px;height:27.6px;background:#ed7d31"></div>
<div class="a t " style="left:606.5px;top:203.1px;font-size:18.8px;line-height:18.8px;color:#fff">Dollar</div>
<div class="a t " style="left:693.0px;top:203.1px;font-size:18.8px;line-height:18.8px;color:#fff">Euro</div>
<div class="a t " style="left:803.5px;top:203.1px;font-size:18.8px;line-height:18.8px;color:#fff">Total</div>
<div class="a " style="left:333.4px;top:252.4px;width:109.2px;height:27.6px;background:#e3eaf4;border:1.5px solid #5273a8"></div>
<div class="a " style="left:332.1px;top:251.0px;width:3.4px;height:3.4px;background:#4a6fb0"></div>
<div class="a " style="left:440.9px;top:251.0px;width:3.4px;height:3.4px;background:#4a6fb0"></div>
<div class="a " style="left:332.1px;top:278.1px;width:3.4px;height:3.4px;background:#4a6fb0"></div>
<div class="a " style="left:440.9px;top:278.1px;width:3.4px;height:3.4px;background:#4a6fb0"></div>
<div class="a " style="left:689.5px;top:225.2px;width:111.1px;height:28.4px;border:1.6px solid #3b7a52;background:#fff"></div>
<div class="a " style="left:798.5px;top:251.2px;width:3.5px;height:3.5px;background:#3b7a52"></div>
<div class="a t cell" style="left:125.6px;top:231.8px;font-size:17.9px;line-height:17.9px;">US Dollar</div>
<div class="a t cell" style="left:337.0px;top:231.8px;font-size:17.9px;line-height:17.9px;">1.00 USD</div>
<div class="a t cell" style="left:446.0px;top:231.8px;font-size:17.9px;line-height:17.9px;">inv. 1.00 USD</div>
<div class="a t cell" style="right:452.0px;top:231.8px;font-size:17.9px;line-height:17.9px;letter-spacing:0.3px">3</div>
<div class="a t cell" style="right:255.5px;top:231.8px;font-size:17.9px;line-height:17.9px;letter-spacing:0.3px">2.630598</div>
<div class="a t cell" style="left:125.6px;top:258.9px;font-size:17.9px;line-height:17.9px;">Euro</div>
<div class="a t cell" style="right:700.0px;top:258.9px;font-size:17.9px;line-height:17.9px;letter-spacing:0.3px">0.876866</div>
<div class="a t cell" style="right:584.0px;top:258.9px;font-size:17.9px;line-height:17.9px;letter-spacing:0.3px">1.140426</div>
<div class="a t cell" style="right:452.0px;top:258.9px;font-size:17.9px;line-height:17.9px;letter-spacing:0.3px">50</div>
<div class="a t cell" style="right:342.0px;top:258.9px;font-size:17.9px;line-height:17.9px;letter-spacing:0.3px">0.876866</div>
<div class="a t cell" style="right:255.5px;top:258.9px;font-size:17.9px;line-height:17.9px;letter-spacing:0.3px">43.8433</div>
<div class="a t cell" style="left:125.6px;top:285.9px;font-size:17.9px;line-height:17.9px;">British Pound</div>
<div class="a t cell" style="right:700.0px;top:285.9px;font-size:17.9px;line-height:17.9px;letter-spacing:0.3px">0.699118</div>
<div class="a t cell" style="right:584.0px;top:285.9px;font-size:17.9px;line-height:17.9px;letter-spacing:0.3px">1.430375</div>
<div class="a t cell" style="right:452.0px;top:285.9px;font-size:17.9px;line-height:17.9px;letter-spacing:0.3px">30</div>
<div class="a t cell" style="right:342.0px;top:285.9px;font-size:17.9px;line-height:17.9px;letter-spacing:0.3px">0.876866</div>
<div class="a t cell" style="right:255.5px;top:285.9px;font-size:17.9px;line-height:17.9px;letter-spacing:0.3px">26.30598</div>
<div class="a t cell" style="left:125.6px;top:313.0px;font-size:17.9px;line-height:17.9px;">Indian Rupee</div>
<div class="a t cell" style="right:700.0px;top:313.0px;font-size:17.9px;line-height:17.9px;letter-spacing:0.3px">66.099906</div>
<div class="a t cell" style="right:584.0px;top:313.0px;font-size:17.9px;line-height:17.9px;letter-spacing:0.3px">0.015129</div>
<div class="a t cell" style="right:452.0px;top:313.0px;font-size:17.9px;line-height:17.9px;letter-spacing:0.3px">30</div>
<div class="a t cell" style="right:342.0px;top:313.0px;font-size:17.9px;line-height:17.9px;letter-spacing:0.3px">0.876866</div>
<div class="a t cell" style="right:255.5px;top:313.0px;font-size:17.9px;line-height:17.9px;letter-spacing:0.3px">26.30598</div>
<div class="a t cell" style="left:125.6px;top:340.1px;font-size:17.9px;line-height:17.9px;">Australian Dollar</div>
<div class="a t cell" style="right:700.0px;top:340.1px;font-size:17.9px;line-height:17.9px;letter-spacing:0.3px">1.309854</div>
<div class="a t cell" style="right:584.0px;top:340.1px;font-size:17.9px;line-height:17.9px;letter-spacing:0.3px">0.763444</div>
<div class="a t cell" style="right:452.0px;top:340.1px;font-size:17.9px;line-height:17.9px;letter-spacing:0.3px">150</div>
<div class="a t cell" style="right:342.0px;top:340.1px;font-size:17.9px;line-height:17.9px;letter-spacing:0.3px">0.876866</div>
<div class="a t cell" style="right:255.5px;top:340.1px;font-size:17.9px;line-height:17.9px;letter-spacing:0.3px">131.5299</div>
<div class="a t cell" style="left:125.6px;top:367.2px;font-size:17.9px;line-height:17.9px;">Canadian Dollar</div>
<div class="a t cell" style="right:700.0px;top:367.2px;font-size:17.9px;line-height:17.9px;letter-spacing:0.3px">1.303419</div>
<div class="a t cell" style="right:584.0px;top:367.2px;font-size:17.9px;line-height:17.9px;letter-spacing:0.3px">0.767213</div>
<div class="a t cell" style="left:125.6px;top:394.3px;font-size:17.9px;line-height:17.9px;">Singapore Dollar</div>
<div class="a t cell" style="right:700.0px;top:394.3px;font-size:17.9px;line-height:17.9px;letter-spacing:0.3px">1.350815</div>
<div class="a t cell" style="right:584.0px;top:394.3px;font-size:17.9px;line-height:17.9px;letter-spacing:0.3px">0.740294</div>
<div class="a t cell" style="left:125.6px;top:421.3px;font-size:17.9px;line-height:17.9px;">Swiss Franc</div>
<div class="a t cell" style="right:700.0px;top:421.3px;font-size:17.9px;line-height:17.9px;letter-spacing:0.3px">0.957739</div>
<div class="a t cell" style="right:584.0px;top:421.3px;font-size:17.9px;line-height:17.9px;letter-spacing:0.3px">1.044125</div>
<div class="a t cell" style="left:125.6px;top:448.4px;font-size:17.9px;line-height:17.9px;">Malaysian Ringgit</div>
<div class="a t cell" style="right:700.0px;top:448.4px;font-size:17.9px;line-height:17.9px;letter-spacing:0.3px">3.8995</div>
<div class="a t cell" style="right:584.0px;top:448.4px;font-size:17.9px;line-height:17.9px;letter-spacing:0.3px">0.256443</div>
<div class="a t cell" style="left:125.6px;top:475.5px;font-size:17.9px;line-height:17.9px;">Japanese Yen</div>
<div class="a t cell" style="right:700.0px;top:475.5px;font-size:17.9px;line-height:17.9px;letter-spacing:0.3px">111.381078</div>
<div class="a t cell" style="right:584.0px;top:475.5px;font-size:17.9px;line-height:17.9px;letter-spacing:0.3px">0.008978</div>
<div class="a t cell" style="left:125.6px;top:502.6px;font-size:17.9px;line-height:17.9px;">Chinese Yuan Renminbi</div>
<div class="a t cell" style="right:700.0px;top:502.6px;font-size:17.9px;line-height:17.9px;letter-spacing:0.3px">6.475873</div>
<div class="a t cell" style="right:584.0px;top:502.6px;font-size:17.9px;line-height:17.9px;letter-spacing:0.3px">0.154419</div>
<div class="a t cell" style="left:693.5px;top:231.8px;font-size:17.9px;line-height:17.9px;">=<span style="color:#4472c4">D4</span></div>
<div class="a " style="left:725.3px;top:229.7px;width:1.0px;height:19.1px;background:#777"></div>
<div class="a " style="left:1125.0px;top:146.5px;width:15.0px;height:431.0px;background:#e2e2e2"></div>
<div class="a " style="left:1127.0px;top:147.0px;width:11.0px;height:11.0px;background:#fff;border:1px solid #c6c6c6"></div>
<div class="a t " style="left:1128.5px;top:149.2px;font-size:8px;line-height:8px;color:#555">&#9652;</div>
<div class="a " style="left:1127.5px;top:159.0px;width:10.0px;height:305.0px;background:#fff;border:1px solid #cfcfcf"></div>
<div class="a " style="left:1127.0px;top:568.0px;width:11.0px;height:9.0px;background:#fff;border:1px solid #c6c6c6"></div>
<div class="a t " style="left:1128.5px;top:569.2px;font-size:8px;line-height:8px;color:#555">&#9662;</div>
<div class="a " style="left:0.0px;top:577.5px;width:1140.0px;height:19.8px;background:#e6e6e6;border-top:1px solid #ababab"></div>
<svg class="a" style="left:19.0px;top:583.0px" width="5" height="7" viewBox="0 0 5 7"><path d="M4.5 0.5L0.5 3.5L4.5 6.5Z" fill="#c4c4c4"/></svg>
<svg class="a" style="left:39.0px;top:583.0px" width="5" height="7" viewBox="0 0 5 7"><path d="M0.5 0.5L4.5 3.5L0.5 6.5Z" fill="#c4c4c4"/></svg>
<div class="a " style="left:71.6px;top:577.0px;width:46.2px;height:17.5px;background:#fff;border-bottom:2px solid #2a7049;border-left:1px solid #c6c6c6;border-right:1px solid #c6c6c6"></div>
<div class="a t " style="left:79.5px;top:581.9px;font-size:9.3px;line-height:9.3px;color:#2f7550;font-weight:bold">Sheet1</div>
<div class="a " style="left:140.0px;top:581.0px;width:12.0px;height:12.0px;border:1px solid #777;border-radius:50%"></div>
<div class="a t " style="left:142.5px;top:582.1px;font-size:10.5px;line-height:10.5px;color:#555;font-weight:bold">+</div>
<div class="a t " style="left:682.5px;top:583.4px;font-size:9px;line-height:9px;color:#aaa">&#8942;</div>
<div class="a " style="left:696.0px;top:582.0px;width:11.0px;height:10.5px;background:#fff;border:1px solid #c6c6c6"></div>
<div class="a t " style="left:698.5px;top:583.7px;font-size:8px;line-height:8px;color:#555">&#9666;</div>
<div class="a " style="left:707.0px;top:582.0px;width:34.5px;height:10.5px;background:#d9d9d9"></div>
<div class="a " style="left:741.5px;top:582.0px;width:373.0px;height:10.5px;background:#fff;border:1px solid #c6c6c6"></div>
<div class="a " style="left:1114.5px;top:582.0px;width:9.5px;height:10.5px;background:#fff;border:1px solid #c6c6c6"></div>
<div class="a t " style="left:1116.0px;top:583.7px;font-size:8px;line-height:8px;color:#555">&#9656;</div>
<div class="a " style="left:0.0px;top:597.3px;width:1140.0px;height:15.2px;background:linear-gradient(#f1f0f0 60%,#fbe4ec)"></div>
<div class="a t " style="left:5.0px;top:600.4px;font-size:8.3px;line-height:8.3px;color:#777">Edit</div>
<div class="a " style="left:939.0px;top:601.0px;width:11.0px;height:9.0px;background:repeating-linear-gradient(#888 0 1px,transparent 1px 3px),repeating-linear-gradient(90deg,#888 0 1px,transparent 1px 3px)"></div>
<div class="a " style="left:966.0px;top:601.0px;width:11.0px;height:9.0px;border:1px solid #888"></div>
<div class="a " style="left:969.0px;top:603.0px;width:5.0px;height:5.0px;border:1px solid #aaa"></div>
<div class="a " style="left:993.0px;top:601.0px;width:11.0px;height:9.0px;border:1px solid #888;border-top:none"></div>
<div class="a " style="left:997.0px;top:601.0px;width:3.0px;height:5.0px;border:1px solid #888;border-top:none"></div>
<div class="a t " style="left:1015.0px;top:601.4px;font-size:9px;line-height:9px;color:#888">-</div>
<div class="a " style="left:1024.0px;top:605.0px;width:71.0px;height:1.0px;background:#bbb"></div>
<div class="a " style="left:1059.0px;top:603.0px;width:1.0px;height:5.0px;background:#999"></div>
<div class="a t " style="left:1098.0px;top:601.0px;font-size:10px;line-height:10px;color:#777">+</div>
<div class="a t " style="left:1114.0px;top:602.3px;font-size:8.5px;line-height:8.5px;color:#c8c8c8">190%</div>
<div class="a " style="left:0.0px;top:612.5px;width:1140.0px;height:28.5px;background:#5c0b35"></div>
<div class="a " style="left:1136.0px;top:612.5px;width:4.0px;height:28.5px;background:#6a2049"></div>
<svg class="a" style="left:11.0px;top:621.5px" width="12" height="11" viewBox="0 0 12 11"><path d="M0 1.4L5.2 0.7V5.2H0ZM6 0.6L12 0V5.2H6ZM0 6H5.2V10.4L0 9.7ZM6 6H12V11L6 10.3Z" fill="#fff"/></svg>
<svg class="a" style="left:42.0px;top:621.5px" width="18" height="11" viewBox="0 0 18 11"><rect x="3.5" y="0.8" width="11" height="9.4" rx="1" fill="none" stroke="#e8e8e8" stroke-width="1.2"/><path d="M1 2.5V8.5M17 2.5V8.5" stroke="#d0d0d0" stroke-width="1.2"/></svg>
<svg class="a" style="left:78.0px;top:618.0px" width="15" height="17" viewBox="0 0 15 17"><path d="M7 0L14 4L11 9L14 12L6 17L3 12L0 9L5 6Z" fill="#e3a93a"/><path d="M10 1L3 9H8L4 16L12 7H7Z" fill="#fff"/></svg>
<svg class="a" style="left:112.5px;top:617.5px" width="19" height="18" viewBox="0 0 19 18"><rect x="0" y="4" width="19" height="14" fill="#1e1e1e"/><path d="M1 4L3 0H6L4 4ZM7 4L9 0H12L10 4ZM13 4L15 0H18L16 4Z" fill="#e6e6e6"/><path d="M3 8V15M3 9Q5 7 7 9V15M7 9Q9 7 11 9V15" fill="none" stroke="#b7cf2a" stroke-width="2"/><path d="M12 8V13Q12 15 14 15Q16 15 16 13V8" fill="none" stroke="#f0f0f0" stroke-width="1.8"/></svg>
<svg class="a" style="left:149.5px;top:618.5px" width="15" height="16" viewBox="0 0 15 16"><path d="M13.5 9.5H4Q4.5 13.3 8.5 13.3Q11.3 13.3 13.3 12V15Q11 16 8.3 16Q1 16 1 8.5Q1 1 8 1Q14.5 1 14.5 7.5V9.5ZM4.2 6.8H11.2Q11 3.7 7.8 3.7Q4.8 3.7 4.2 6.8Z" fill="#1f7ee0"/></svg>
<svg class="a" style="left:183.0px;top:617.0px" width="18" height="18" viewBox="0 0 18 18"><circle cx="9" cy="9" r="8.5" fill="#f08a1d"/><circle cx="9.5" cy="8.5" r="5.5" fill="#3a66b5"/><path d="M1 7Q2 16 9 17Q16 17 17.5 10Q16 14 11 14Q5 14 4 8Q3 4 6 2Q1 3 1 7Z" fill="#f36b21"/><path d="M13 1Q18 4 17.5 10Q16 5 12 4Z" fill="#f9c041"/></svg>
<svg class="a" style="left:218.0px;top:617.0px" width="17" height="17" viewBox="0 0 17 17"><circle cx="8.5" cy="8.5" r="8.3" fill="#db4437"/><path d="M8.5 8.5L1.3 4.35A8.3 8.3 0 0 0 8.5 16.8Z" fill="#0f9d58"/><path d="M8.5 8.5L15.7 4.35A8.3 8.3 0 0 1 8.5 16.8Z" fill="#f4c20d"/><circle cx="8.5" cy="8.5" r="3.9" fill="#fff"/><circle cx="8.5" cy="8.5" r="3" fill="#4285f4"/></svg>
<div class="a " style="left:243.3px;top:612.5px;width:35.2px;height:28.5px;background:#8c0e4b"></div>
<div class="a " style="left:243.3px;top:639.0px;width:35.2px;height:2.0px;background:#e3a6c4"></div>
<svg class="a" style="left:252.5px;top:618.0px" width="17" height="16" viewBox="0 0 17 16"><rect x="6" y="1" width="10.5" height="14" fill="#f4f4f4"/><path d="M6 5h10.5M6 8.5h10.5M6 12h10.5M11 1v14" stroke="#2a7a4a" stroke-width="0.9"/><rect x="0" y="2" width="9.5" height="12" fill="#217346"/><path d="M2.3 5L7.2 11M7.2 5L2.3 11" stroke="#fff" stroke-width="1.5"/></svg>
<svg class="a" style="left:288.0px;top:617.0px" width="17" height="17" viewBox="0 0 17 17"><circle cx="8.5" cy="8.5" r="8.3" fill="#db4437"/><path d="M8.5 8.5L1.3 4.35A8.3 8.3 0 0 0 8.5 16.8Z" fill="#0f9d58"/><path d="M8.5 8.5L15.7 4.35A8.3 8.3 0 0 1 8.5 16.8Z" fill="#f4c20d"/><circle cx="8.5" cy="8.5" r="3.9" fill="#fff"/><circle cx="8.5" cy="8.5" r="3" fill="#4285f4"/></svg>
<div class="a " style="left:280.0px;top:639.0px;width:34.0px;height:2.0px;background:#b9809d"></div>
<svg class="a" style="left:1022.0px;top:623.5px" width="10" height="6" viewBox="0 0 10 6"><path d="M0.5 5.5L5 1L9.5 5.5" fill="none" stroke="#f0f0f0" stroke-width="1.1"/></svg>
<svg class="a" style="left:1037.5px;top:622.0px" width="13" height="10" viewBox="0 0 13 10"><rect x="3.5" y="0.5" width="9" height="6.5" fill="none" stroke="#f0f0f0"/><path d="M8 7V9.5M5.5 9.5H10.5M0.5 1.5V6.5M0.5 4H3.5" stroke="#f0f0f0"/></svg>
<svg class="a" style="left:1054.5px;top:622.0px" width="13" height="10" viewBox="0 0 13 10"><path d="M0.5 3.5H3L6.5 0.5V9.5L3 6.5H0.5Z" fill="none" stroke="#f0f0f0"/><path d="M8.5 3Q9.5 5 8.5 7M10.5 1.5Q12.5 5 10.5 8.5" fill="none" stroke="#f0f0f0"/></svg>
<svg class="a" style="left:1072.0px;top:620.0px" width="12" height="13" viewBox="0 0 12 13"><rect x="0.5" y="0.5" width="10" height="10" fill="none" stroke="#f0f0f0"/><path d="M2.5 3.5H8.5M2.5 5.5H8.5M2.5 7.5H5" stroke="#f0f0f0" stroke-width="0.8"/><circle cx="8.5" cy="9.5" r="3" fill="#5c0b35" stroke="#f0f0f0"/><path d="M7 9.5H10" stroke="#f0f0f0"/></svg>
<div class="a t " style="left:1096.4px;top:615.9px;font-size:9.3px;line-height:9.3px;color:#f4f4f4;transform:scaleX(0.9);transform-origin:0 0">7:07 PM</div>
<div class="a t " style="left:1095.0px;top:627.6px;font-size:9.3px;line-height:9.3px;color:#f4f4f4;transform:scaleX(0.93);transform-origin:0 0">4/4/2016</div>
<div class="a " style="left:12.0px;top:11.8px;width:40.0px;height:40.0px;background:#fff;border-radius:50%"></div>
<div class="a t " style="left:12.6px;top:23.1px;font-size:12.3px;line-height:12.3px;color:#151515;letter-spacing:-0.3px">MJ</div>
<div class="a " style="left:30.3px;top:21.3px;width:20.9px;height:15.3px;background:#d8262a;border-radius:3.5px"></div>
<div class="a t " style="left:32.0px;top:22.9px;font-size:13.5px;line-height:13.5px;color:#fff;font-weight:bold;transform:scaleX(0.58);transform-origin:0 0;letter-spacing:-0.3px">Tube</div>
<div class="a t " style="left:63.0px;top:21.9px;font-size:19px;line-height:19px;color:#fff;text-shadow:0 0 2px rgba(0,0,0,.5);transform:scaleX(0.928);transform-origin:0 0">How to Add Real Time Currency Converter in Excel Sheet (Calculate Currency &amp; Update)</div>
<svg class="a" style="left:968px;top:13px" width="22" height="22"><circle cx="11" cy="11" r="10" fill="#fff"/><path d="M10 5V11.5L14.5 14.5" stroke="#222" stroke-width="1.8" fill="none"/></svg>
<div class="a t " style="left:940.0px;top:43.5px;font-size:13.6px;line-height:13.6px;color:#fff;-webkit-text-stroke:0.45px #fff;text-shadow:0 0 2px rgba(0,0,0,.55),0 1px 1px rgba(0,0,0,.3);transform:scaleX(1.03);transform-origin:0 0">Смотреть ...</div>
<svg class="a" style="left:1067px;top:15px" width="24" height="18"><path d="M1 17Q3 8 13 7V2L22 9L13 16V11Q6 11 1 17Z" fill="#fff"/></svg>
<div class="a t " style="left:1039.0px;top:43.5px;font-size:13.6px;line-height:13.6px;color:#fff;-webkit-text-stroke:0.45px #fff;text-shadow:0 0 2px rgba(0,0,0,.55),0 1px 1px rgba(0,0,0,.3);transform:scaleX(1.04);transform-origin:0 0">Поделиться</div>
<svg class="a" style="left:536.4px;top:297.0px" width="68" height="48" viewBox="0 0 68 48"><path d="M66.52,7.74c-0.78-2.93-2.49-5.41-5.42-6.19C55.79,.13,34,0,34,0S12.21,.13,6.9,1.55C3.97,2.33,2.27,4.81,1.48,7.74C0.06,13.05,0,24,0,24s0.06,10.95,1.48,16.26c0.78,2.93,2.49,5.41,5.42,6.19C12.21,47.87,34,48,34,48s21.79-0.13,27.1-1.55c2.93-0.78,4.64-3.26,5.42-6.19C67.94,34.95,68,24,68,24S67.94,13.05,66.52,7.74z" fill="#652727" fill-opacity="0.92"/><path d="M26.5 14.5L44.5 24L26.5 33.5Z" fill="#fff"/></svg>
</div>
<div class="a cap">How to Add Real Time Currency Converter in Excel Sheet (Calculate Currency &amp; Update)|5:32</div>
</body></html>
